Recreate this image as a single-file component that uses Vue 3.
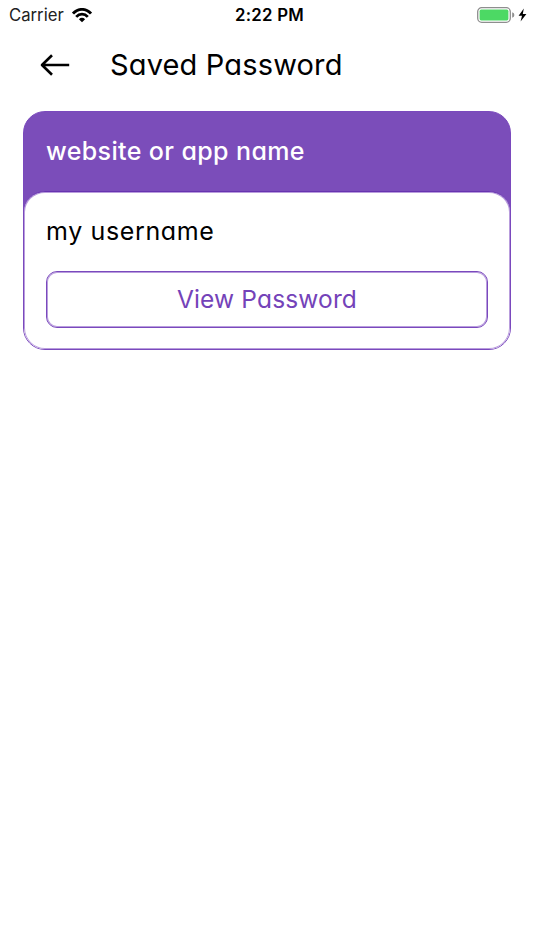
<script setup>
const entry = { site: 'website or app name', user: 'my username' }
</script>

<template>
  <main class="screen">
    <div class="status">
      <div class="side">
        <span class="carrier">Carrier</span>
        <svg class="wifi" width="20" height="15" viewBox="0 0 20 15">
          <g fill="none" stroke="#000" stroke-width="2.8">
            <path d="M1 5.6C6-.1 14-.1 19 5.6" />
            <path d="M4.2 8.9C7.5 5.3 12.5 5.3 15.8 8.9" />
          </g>
          <path d="M6.9 11.2Q10 8.4 13.1 11.2L10 14.3Z" />
        </svg>
      </div>
      <span class="time">2:22 PM</span>
      <div class="side end">
        <svg width="50" height="18" viewBox="0 0 50 18">
          <rect x=".7" y="1.7" width="32.6" height="14.6" rx="4" fill="#fff" stroke="#8e8e8e" stroke-width="1.3" />
          <rect x="2.6" y="3.6" width="28.8" height="10.8" rx="1.6" fill="#4cd964" />
          <path d="M35.2 6.3Q37.4 7 37.4 9T35.2 11.7Z" fill="#8e8e8e" />
          <path d="M46.8 2.6L41.6 9.8H45L43.6 15.6L49.4 7.9H45.8Z" />
        </svg>
      </div>
    </div>

    <header class="nav">
      <svg width="30" height="22" viewBox="0 0 30 22" fill="none" stroke="#000" stroke-width="2.6">
        <path d="M29.2 11H2M12 1.2L2 11L12 20.8" stroke-linejoin="round" />
      </svg>
      <h1 class="title">Saved Password</h1>
    </header>

    <section class="card">
      <h2 class="site">{{ entry.site }}</h2>
      <div class="body">
        <p class="user">{{ entry.user }}</p>
        <button class="view" type="button"><span class="label">View Password</span></button>
      </div>
    </section>
  </main>
</template>

<style>
body {
  background: #fff;
}
</style>

<style scoped>
.screen {
  min-height: 950px;
  box-sizing: border-box;
  color: #000;
  font-family: Inter, sans-serif;
  font-feature-settings: "cv11";
}
.status {
  display: grid;
  grid-template-columns: 1fr auto 1fr;
  align-items: center;
  height: 30px;
  padding: 0 7px 0 9px;
  font-feature-settings: normal;
}
.side {
  display: flex;
  align-items: center;
  gap: 8px;
}
.end {
  justify-content: flex-end;
}
.carrier {
  font-size: 16.7px;
  color: #222;
}
.time {
  padding-left: 3px;
  font-size: 16.8px;
  font-weight: 600;
  letter-spacing: 0.25px;
}
.nav {
  display: flex;
  align-items: center;
  gap: 40px;
  height: 69px;
  padding-left: 40px;
}
.title {
  margin: 0;
  padding-bottom: 1px;
  font-size: 29px;
  font-weight: 400;
  letter-spacing: 0.15px;
}
.card {
  box-sizing: border-box;
  width: 488px;
  height: 239px;
  margin: 12px auto 0;
  border: 1px solid #7a49bd;
  border-radius: 22px;
  background: linear-gradient(#7b4dba 110px, #fff 110px);
}
.site {
  height: 79px;
  margin: 0;
  padding-left: 22px;
  color: #fff;
  font-size: 25px;
  font-weight: 500;
  line-height: 79px;
  letter-spacing: 0.38px;
}
.body {
  box-sizing: border-box;
  height: 158px;
  padding: 21px 22px 0;
  border-top: 1px solid #6733b0;
  border-radius: 21px;
  background: #fff;
  box-shadow: inset 0 0 0 1px #b99ddd;
}
.user {
  height: 36px;
  margin: 0 0 22px;
  font-size: 25px;
  line-height: 36px;
  letter-spacing: 0.63px;
}
.view {
  display: block;
  box-sizing: border-box;
  width: 100%;
  height: 57px;
  padding: 0 0 2px;
  border: 1px solid #7a49bd;
  border-radius: 11px;
  background: #fff;
  box-shadow: inset 0 0 0 1px #b99ddd;
  color: #7443b9;
  font: inherit;
  font-feature-settings: inherit;
  font-size: 24.5px;
  letter-spacing: 0.15px;
}
</style>
